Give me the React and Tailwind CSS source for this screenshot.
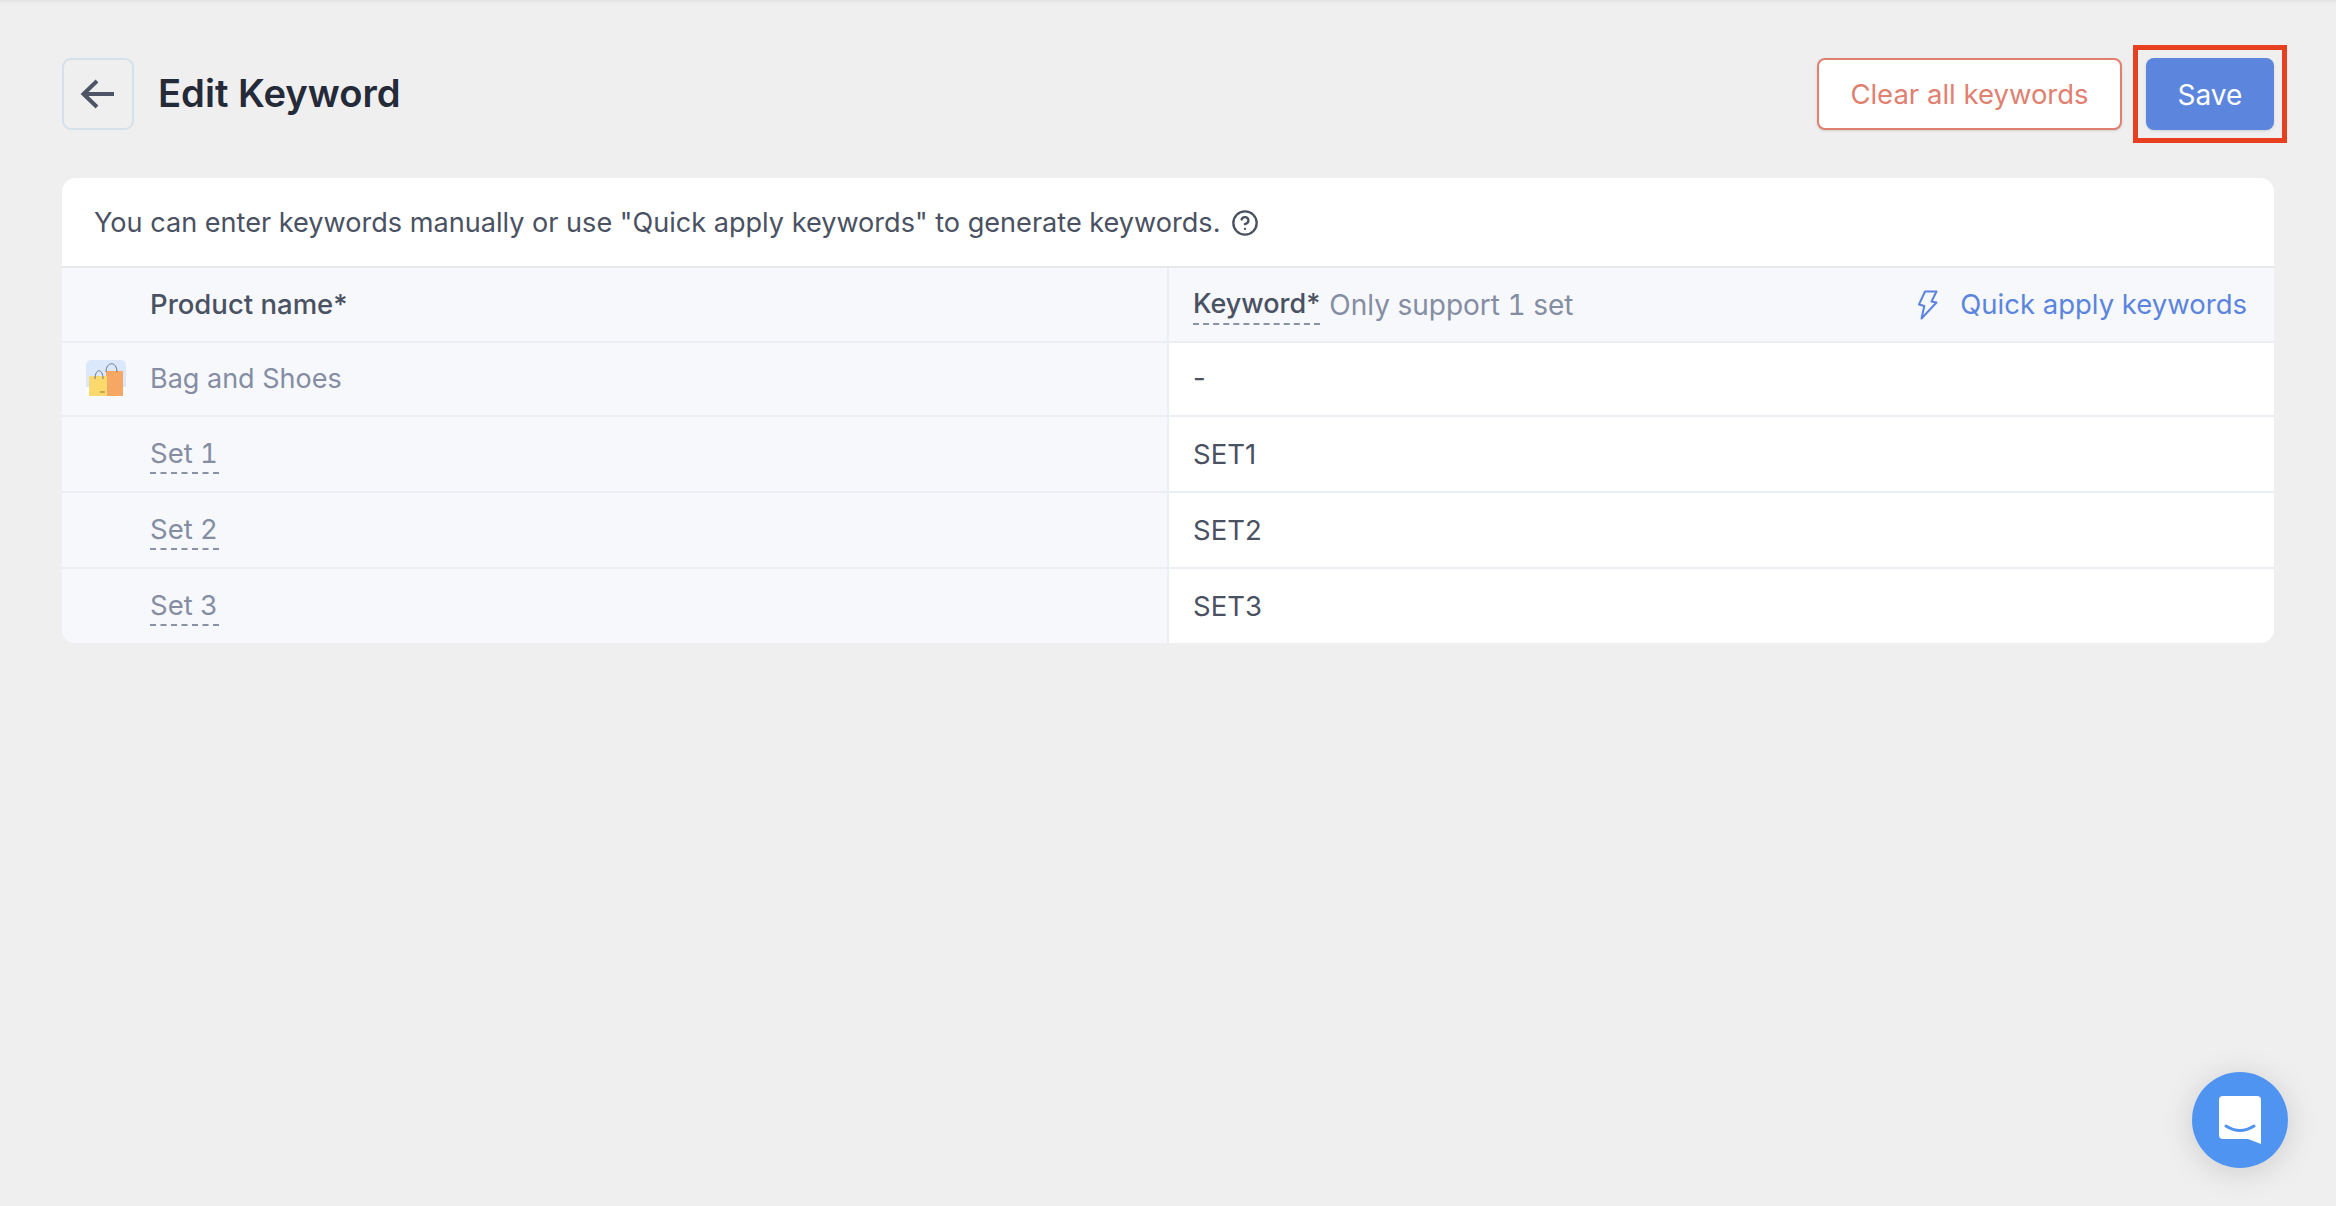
import { CircleHelp } from "lucide-react";

const rows = [
  { name: "Set 1", keyword: "SET1" },
  { name: "Set 2", keyword: "SET2" },
  { name: "Set 3", keyword: "SET3" },
];

function BagIcon() {
  return (
    <svg width="40" height="37" viewBox="0 0 40 37" fill="none">
      <path d="M5 0H35a5 5 0 0 1 5 5V32a5 5 0 0 1-5 5H5a5 5 0 0 1-5-5V5a5 5 0 0 1 5-5Z" fill="#fbfcfe" />
      <path d="M5 0H35a5 5 0 0 1 5 5V27H0V5a5 5 0 0 1 5-5Z" fill="#dbe8fb" />
      <path d="M20 11H37V36H20Z" fill="#f5a763" />
      <path d="M3 16H21V36H3Z" fill="#fbd96c" />
      <path d="M20 12C20 1 31 1 31 12" stroke="#6b7690" strokeWidth="1" />
      <path d="M9 19C9 8 17 8 17 19" stroke="#6b7690" strokeWidth="1" />
      <path d="M14 32H19" stroke="#8a7a45" strokeWidth="1" />
    </svg>
  );
}

function BoltIcon() {
  return (
    <svg width="20" height="30" viewBox="0 0 20 30" fill="none">
      <path
        d="M7 1.5H18.5L13.5 11.5L18.5 12.5L3.5 28.5L6.3 16L1 14.5Z"
        stroke="#5b84de"
        strokeWidth="2"
        strokeLinejoin="round"
      />
    </svg>
  );
}

export default function App() {
  return (
    <div className="relative h-[1206px] bg-[#efefef] px-[62px] pt-[58px] font-['Inter',sans-serif] text-[27.5px] text-[#4a5162] overflow-hidden">
      <div className="absolute inset-x-0 top-0 h-[4px] bg-gradient-to-b from-[#e2e2e2] to-[#efefef]"></div>

      <div className="flex items-center justify-between h-[72px]">
        <div className="flex items-center gap-[24px]">
          <button className="w-[72px] h-[72px] flex items-center justify-center rounded-[9px] border-2 border-[#d6e0ea]">
            <svg width="36" height="32" viewBox="0 0 36 32" fill="none">
              <path d="M34 16H4M17 3L3.5 16L17 29" stroke="#4d5466" strokeWidth="4" />
            </svg>
          </button>
          <h1 className="text-[38.2px] font-semibold text-[#252a38]">Edit Keyword</h1>
        </div>
        <div className="flex items-center gap-[24px]">
          <button className="w-[305px] h-[72px] pt-[1px] rounded-[8px] border-2 border-[#df8070] bg-white text-[#df8070] shadow-sm">
            Clear all keywords
          </button>
          <div className="relative">
            <button className="w-[128px] h-[72px] pt-[1px] rounded-[8px] bg-[#5c85de] text-[28px] text-white shadow-sm">
              Save
            </button>
            <div className="absolute -inset-x-[13px] -inset-y-[13px] border-[5px] border-[#e8401f]"></div>
          </div>
        </div>
      </div>

      <div className="mt-[48px] rounded-[14px] bg-white overflow-hidden">
        <div className="h-[88px] flex items-center gap-[11px] pl-[32px] pt-[2px] text-[27.1px]">
          <span>You can enter keywords manually or use "Quick apply keywords" to generate keywords.</span>
          <CircleHelp size={28} strokeWidth={2} />
        </div>

        <div className="grid grid-cols-[1107px_1fr] border-t-2 border-[#e6e8ec]">
          <div className="h-[73px] flex items-center pl-[88px] bg-[#f6f8fc] border-r-2 border-[#ebeef3] font-medium">
            Product name*
          </div>
          <div className="h-[73px] flex items-center justify-between pl-[24px] pr-[27px] bg-[#f6f8fc]">
            <div className="flex items-center gap-[9px]">
              <span className="text-[27px] leading-[38px] font-medium border-b-2 border-dashed border-[#8a92a8]">Keyword*</span>
              <span className="text-[28px] tabular-nums text-[#858da3]">Only support 1 set</span>
            </div>
            <div className="flex items-center gap-[22px] text-[#5b84de]">
              <BoltIcon />
              <span>Quick apply keywords</span>
            </div>
          </div>

          <div className="h-[74px] flex items-center border-t-2 border-[#ebeef3] bg-[#f6f8fc] border-r-2 text-[27px] text-[#858da3]">
            <div className="w-[88px] pl-[24px] pb-[2px]">
              <BagIcon />
            </div>
            Bag and Shoes
          </div>
          <div className="h-[74px] flex items-center pl-[24px] border-t-2 border-[#ebeef3] bg-white">-</div>

          {rows.map((row) => (
            <div key={row.name} className="contents">
              <div className="h-[76px] flex items-center pl-[88px] border-t-2 border-r-2 border-[#ebeef3] bg-[#f6f8fc] text-[#858da3]">
                <span className="tabular-nums leading-[38px] pr-[1px] border-b-2 border-dashed border-[#8a92a8]">{row.name}</span>
              </div>
              <div className="h-[76px] flex items-center pl-[24px] pt-[2px] border-t-2 border-[#ebeef3] bg-white">
                {row.keyword}
              </div>
            </div>
          ))}
        </div>
      </div>

      <button className="absolute left-[2192px] top-[1072px] w-[96px] h-[96px] rounded-full bg-[#5094f2] flex items-center justify-center shadow-[0_4px_32px_rgba(0,0,0,0.14)]">
        <svg width="42" height="48" viewBox="0 0 42 48" fill="none">
          <path d="M4 0H38a4 4 0 0 1 4 4V48L29 43H4a4 4 0 0 1-4-4V4a4 4 0 0 1 4-4Z" fill="white" />
          <path d="M7 30Q21 39 35 30" stroke="#5094f2" strokeWidth="3" strokeLinecap="round" />
        </svg>
      </button>
    </div>
  );
}
